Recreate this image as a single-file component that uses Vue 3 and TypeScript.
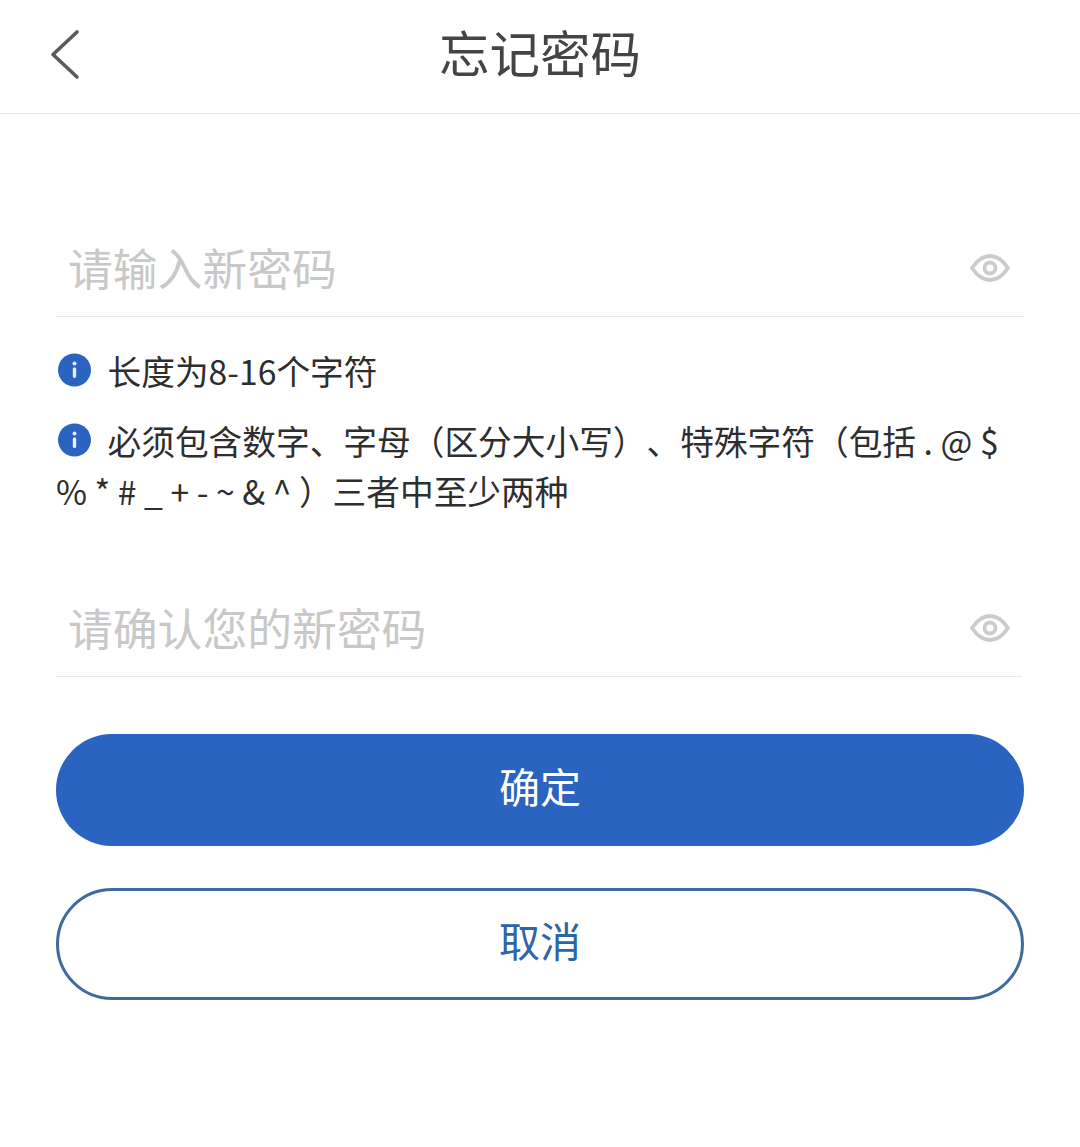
<script setup lang="ts">
const eyePath = 'M2 15 C8 6 14 3 20 3 C26 3 32 6 38 15 C32 24 26 27 20 27 C14 27 8 24 2 15 Z'
</script>

<template>
  <div class="page">
    <header class="nav">
      <svg class="back" width="80" height="113" viewBox="0 0 80 113" fill="none">
        <path d="M77 32 L53 54.500 L77 77" stroke="#5a5a5a" stroke-width="3.600" stroke-linecap="round" stroke-linejoin="round" />
      </svg>
      <h1 class="title">忘记密码</h1>
    </header>

    <main class="form">
      <div class="field first">
        <span class="placeholder">请输入新密码</span>
        <svg class="eye" width="40" height="30" viewBox="0 0 40 30" fill="none">
          <path :d="eyePath" stroke="#cbcbcb" stroke-width="3.800" stroke-linejoin="round" />
          <circle cx="20" cy="15" r="5.500" stroke="#cbcbcb" stroke-width="3.800" />
        </svg>
      </div>

      <div class="tips">
        <p class="tip one">
          <svg class="info" width="34" height="34" viewBox="0 0 34 34">
            <circle cx="16.500" cy="17" r="16.500" fill="#2a63c0" />
            <circle cx="16.500" cy="10.500" r="2" fill="#e6eefa" />
            <rect x="14.800" y="14.500" width="3.400" height="10.500" rx="1.400" fill="#e6eefa" />
          </svg>
          长度为8-16个字符
        </p>
        <p class="tip two">
          <svg class="info" width="34" height="34" viewBox="0 0 34 34">
            <circle cx="16.500" cy="17" r="16.500" fill="#2a63c0" />
            <circle cx="16.500" cy="10.500" r="2" fill="#e6eefa" />
            <rect x="14.800" y="14.500" width="3.400" height="10.500" rx="1.400" fill="#e6eefa" />
          </svg>
          必须包含数字、字母（区分大小写）、特殊字符（包括 . @ $ % * # _ + - ~ &amp; ^ ）三者中至少两种
        </p>
      </div>

      <div class="field second">
        <span class="placeholder">请确认您的新密码</span>
        <svg class="eye" width="40" height="30" viewBox="0 0 40 30" fill="none">
          <path :d="eyePath" stroke="#cbcbcb" stroke-width="3.800" stroke-linejoin="round" />
          <circle cx="20" cy="15" r="5.500" stroke="#cbcbcb" stroke-width="3.800" />
        </svg>
      </div>

      <button class="btn primary">确定</button>
      <button class="btn outline">取消</button>
    </main>
  </div>
</template>

<style>
body {
  background: #fff;
}
</style>

<style scoped>
.page {
  width: 1080px;
  height: 1147px;
  background: #fff;
  font-family: "Noto Sans CJK SC", "Noto Sans", sans-serif;
  text-spacing-trim: space-all;
  overflow: hidden;
}

.nav {
  position: relative;
  height: 113px;
  display: flex;
  align-items: center;
  justify-content: center;
  border-bottom: 1px solid #e8e8e8;
}

.back {
  position: absolute;
  left: 0;
  top: 0;
}

.title {
  margin: 0 0 11px;
  font-size: 50.500px;
  font-weight: 400;
  color: #444;
  line-height: 1;
}

.form {
  display: flex;
  flex-direction: column;
  padding: 0 56px;
}

.field {
  display: flex;
  align-items: center;
  justify-content: space-between;
  height: 64px;
  padding: 0 14px 16px 12px;
  border-bottom: 1px solid #e8e8e8;
}

.field.first {
  margin-top: 122px;
}

.field.second {
  margin-top: 80px;
  margin-right: 2px;
  padding-right: 12px;
}

.placeholder {
  font-size: 44.800px;
  color: #c8c8c8;
  line-height: 1;
  margin-top: -2px;
}

.tips {
  margin-top: 29px;
  font-size: 33.700px;
  line-height: 50px;
  color: #2e2e2e;
}

.tip {
  margin: 0;
}

.tip.two {
  margin-top: 20px;
}

.info {
  vertical-align: -2px;
  margin: 0 8px 0 2px;
}

.btn {
  display: block;
  width: 968px;
  font-family: inherit;
  font-size: 41px;
  line-height: 1;
  padding: 0 0 10px;
  border-radius: 56px;
  box-sizing: border-box;
}

.primary {
  height: 112px;
  margin-top: 57px;
  border: none;
  background: #2a63c0;
  color: #fff;
}

.outline {
  height: 112px;
  margin-top: 42px;
  border: 3px solid #3f6a9e;
  background: #fff;
  color: #2e64a8;
}
</style>
